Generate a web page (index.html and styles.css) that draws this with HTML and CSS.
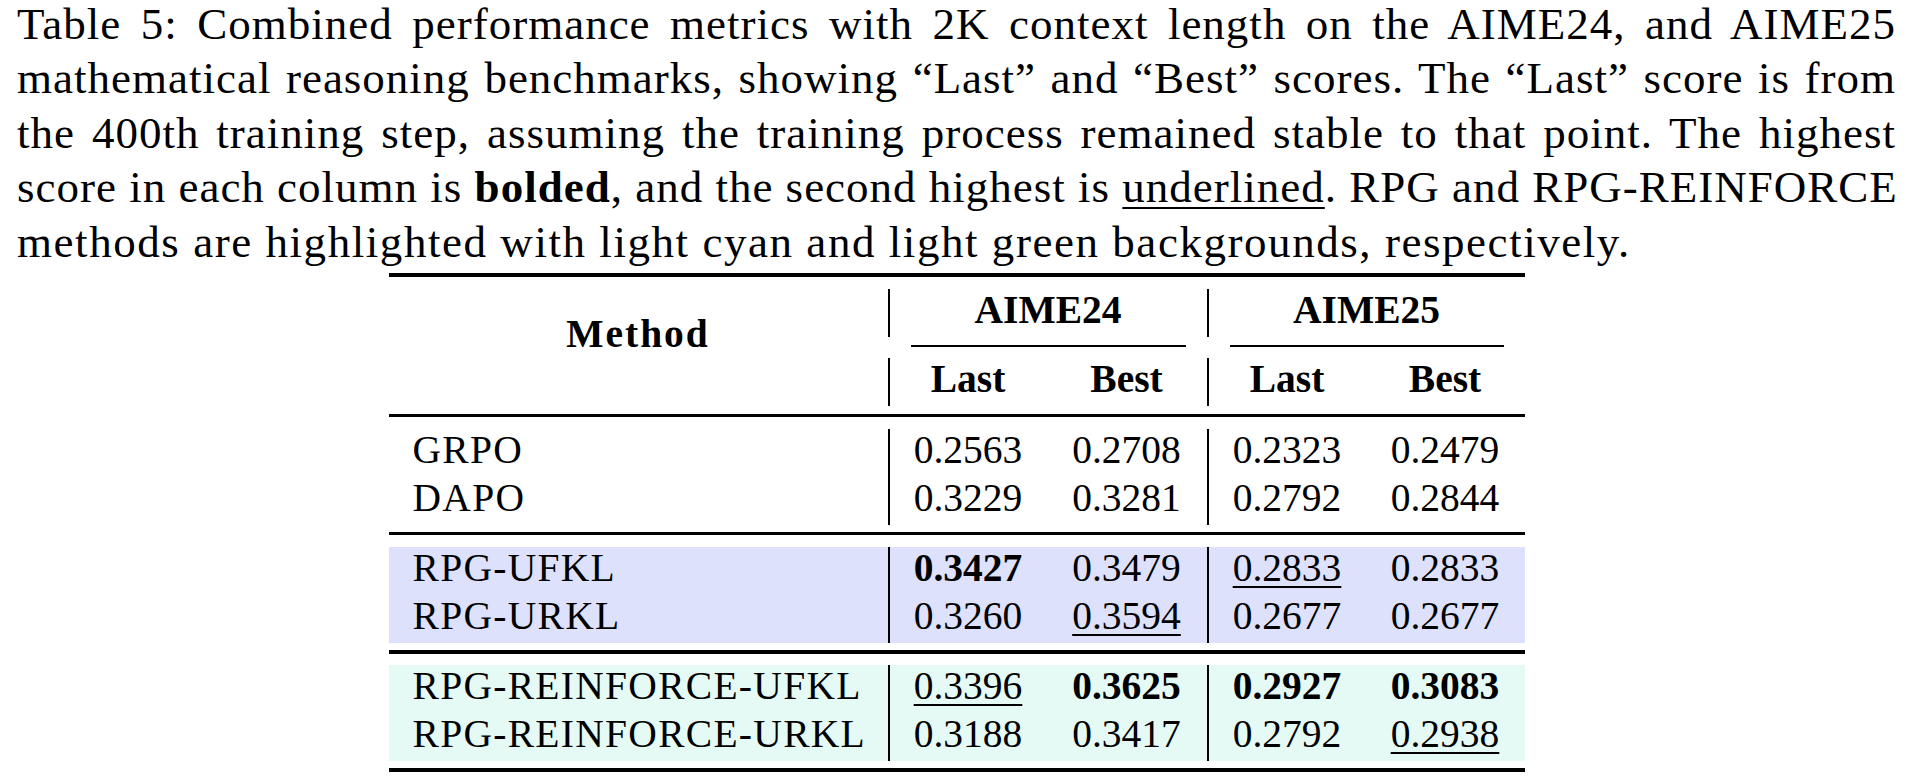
FILE: index.html
```html
<!DOCTYPE html>
<html lang="en">
<head>
<meta charset="utf-8">
<title>Table 5</title>
<link rel="stylesheet" href="styles.css">
</head>
<body>
<figure class="figure">
  <p class="caption">
    <span class="line">Table 5: Combined performance metrics with 2K context length on the AIME24, and AIME25</span>
    <span class="line">mathematical reasoning benchmarks, showing “Last” and “Best” scores. The “Last” score is from</span>
    <span class="line">the 400th training step, assuming the training process remained stable to that point. The highest</span>
    <span class="line">score in each column is <b>bolded</b>, and the second highest is <u>underlined</u>. RPG and RPG-REINFORCE</span>
    <span class="line last">methods are highlighted with light cyan and light green backgrounds, respectively.</span>
  </p>

  <div class="table">
    <div class="rule rule-top"></div>

    <div class="cell head method">Method</div>
    <div class="cell head group bar">AIME24</div>
    <div class="cell head group bar">AIME25</div>
    <div class="cmid"></div>
    <div class="cmid"></div>
    <div class="cell head bar">Last</div>
    <div class="cell head">Best</div>
    <div class="cell head bar">Last</div>
    <div class="cell head">Best</div>

    <div class="rule rule-mid first"></div>

    <div class="cell label">GRPO</div>
    <div class="cell num bar">0.2563</div>
    <div class="cell num">0.2708</div>
    <div class="cell num bar">0.2323</div>
    <div class="cell num">0.2479</div>

    <div class="cell label">DAPO</div>
    <div class="cell num bar">0.3229</div>
    <div class="cell num">0.3281</div>
    <div class="cell num bar">0.2792</div>
    <div class="cell num">0.2844</div>

    <div class="rule rule-mid"></div>

    <div class="cell label rpg">RPG-UFKL</div>
    <div class="cell num bar rpg"><b>0.3427</b></div>
    <div class="cell num rpg">0.3479</div>
    <div class="cell num bar rpg"><u>0.2833</u></div>
    <div class="cell num rpg">0.2833</div>

    <div class="cell label rpg">RPG-URKL</div>
    <div class="cell num bar rpg">0.3260</div>
    <div class="cell num rpg"><u>0.3594</u></div>
    <div class="cell num bar rpg">0.2677</div>
    <div class="cell num rpg">0.2677</div>

    <div class="rule rule-thick"></div>

    <div class="cell label rein">RPG-REINFORCE-UFKL</div>
    <div class="cell num bar rein"><u>0.3396</u></div>
    <div class="cell num rein"><b>0.3625</b></div>
    <div class="cell num bar rein"><b>0.2927</b></div>
    <div class="cell num rein"><b>0.3083</b></div>

    <div class="cell label rein">RPG-REINFORCE-URKL</div>
    <div class="cell num bar rein">0.3188</div>
    <div class="cell num rein">0.3417</div>
    <div class="cell num bar rein">0.2792</div>
    <div class="cell num rein"><u>0.2938</u></div>

    <div class="rule rule-bottom"></div>
  </div>
</figure>
</body>
</html>
```

FILE: styles.css
```css
html, body {
  margin: 0;
  padding: 0;
  background: #ffffff;
  color: #000000;
}

body {
  font-family: "Liberation Serif", "Times New Roman", serif;
}

.figure {
  margin: 0;
  padding: 0;
}

.caption {
  margin: -3px 17px 0 17px;
  font-size: 45px;
  line-height: 54.4px;
  letter-spacing: 1px;
}

.caption .line {
  display: block;
  text-align: justify;
  text-align-last: justify;
  white-space: nowrap;
}

.caption .line.last {
  text-align-last: left;
  letter-spacing: 1.55px;
}

.caption b {
  font-weight: bold;
}

.caption u,
.table u {
  text-decoration: underline;
  text-decoration-thickness: 2px;
  text-underline-offset: 5px;
}

.table {
  display: grid;
  grid-template-columns: 499px 159px 160px 159px 159px;
  width: 1136px;
  margin: 4px auto 0 auto;
  font-size: 39.5px;
}

.rule {
  grid-column: 1 / -1;
  background: #000000;
}

.rule-top {
  height: 4px;
  margin-bottom: 12px;
}

.rule-mid {
  height: 3px;
  margin-top: 7px;
  margin-bottom: 12px;
}

.rule-mid.first {
  margin-top: 8px;
}

.rule-thick {
  height: 4px;
  margin-top: 7px;
  margin-bottom: 11px;
}

.rule-bottom {
  height: 4px;
  margin-top: 7px;
}

.cell {
  box-sizing: border-box;
  height: 48px;
  padding: 1px 24px 0 24px;
  line-height: 40px;
  white-space: nowrap;
}

.bar {
  border-left: 2px solid #000000;
}

.head {
  font-weight: bold;
  text-align: center;
}

.method {
  grid-row: span 3;
  height: auto;
  padding-top: 25px;
  letter-spacing: 2px;
}

.group {
  grid-column: span 2;
}

.cmid {
  grid-column: span 2;
  height: 2px;
  margin: 8px 21px 11px 23px;
  background: #000000;
}

.label {
  text-align: left;
  letter-spacing: 1.3px;
}

.num {
  text-align: center;
}

.num b {
  font-weight: bold;
}

.rpg {
  background: #dde1fc;
}

.rein {
  background: #e6faf5;
}
```
